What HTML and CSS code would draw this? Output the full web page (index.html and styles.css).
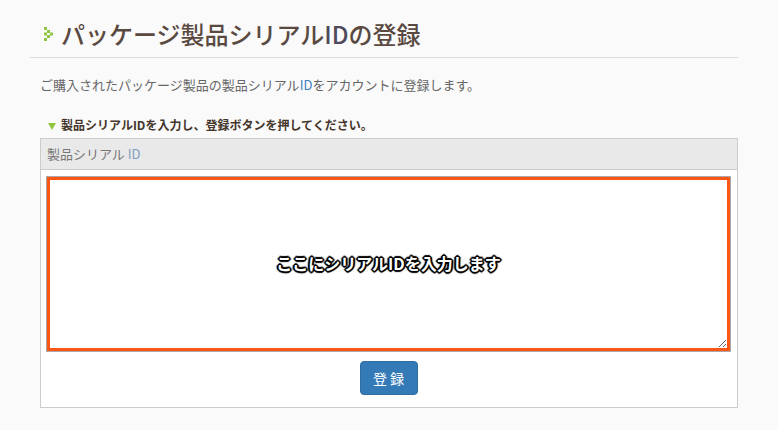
FILE: index.html
```
<!DOCTYPE html>
<html lang="ja">

<head>
    <meta charset="UTF-8">
    <meta name="viewport" content="width=device-width, initial-scale=1.0">
    <title>パッケージ製品シリアルIDの登録</title>
    <link rel="stylesheet" href="styles.css">
</head>

<body>
    <div id="page">
        <h1 class="title">
            <svg class="title-icon" width="9" height="14" viewBox="0 0 9 14">
                <rect x="0" y="0" width="3" height="3" />
                <rect x="3" y="3" width="3" height="3" />
                <rect x="0" y="5.5" width="3" height="3" />
                <rect x="6" y="5.5" width="3" height="3" />
                <rect x="3" y="8" width="3" height="3" />
                <rect x="0" y="11" width="3" height="3" />
            </svg>
            パッケージ製品シリアル<span class="latin">ID</span>の登録
        </h1>

        <p class="lead">ご購入されたパッケージ製品の製品シリアル<span class="blue">ID</span>をアカウントに登録します。</p>

        <p class="step"><span class="arrow"></span>製品シリアルIDを入力し、登録ボタンを押してください。</p>

        <div class="panel">
            <div class="panel-head">製品シリアル <span class="blue-gray">ID</span></div>
            <div class="panel-body">
                <textarea id="serial" name="serial" placeholder="ここにシリアルIDを入力します"></textarea>
                <div class="actions">
                    <button class="btn">登 録</button>
                </div>
            </div>
        </div>
    </div>
</body>

</html>
```

FILE: styles.css
```
* {
    margin: 0;
    padding: 0;
    box-sizing: border-box;
}

body {
    background-color: #fafafa;
    font-family: "Noto Sans CJK JP", "Noto Sans", sans-serif;
    color: #555;
}

#page {
    width: 708px;
    margin-left: 30px;
    padding-top: 18px;
}

.title {
    display: flex;
    align-items: center;
    padding: 0 0 7px 14px;
    font-size: 24px;
    line-height: 32px;
    font-weight: 500;
    color: #594941;
    border-bottom: 1px solid #dcdcdc;
}

.title-icon {
    fill: #8fc640;
    margin-right: 8px;
}

.title .latin {
    color: #4e4a5a;
}

.lead {
    margin-top: 17px;
    padding-left: 10px;
    font-size: 13px;
    line-height: 20px;
    color: #666;
}

.blue {
    color: #3d7fc1;
}

.blue-gray {
    color: #7e9cc0;
}

.step {
    display: flex;
    align-items: center;
    margin-top: 22px;
    padding-left: 18px;
    font-size: 12px;
    line-height: 16px;
    font-weight: 700;
    color: #45362b;
}

.arrow {
    width: 0;
    height: 0;
    border-left: 4px solid transparent;
    border-right: 4px solid transparent;
    border-top: 7px solid #8fc640;
    margin: 2px 5px 0 0;
}

.panel {
    margin: 5px 0 0 10px;
    border: 1px solid #ccc;
    background-color: #fff;
}

.panel-head {
    height: 31px;
    padding: 0 6px;
    line-height: 30px;
    font-size: 13px;
    color: #777;
    background-color: #e9e9e9;
    border-bottom: 1px solid #ccc;
}

.panel-body {
    padding: 6px 6px 12px 5px;
}

#serial {
    display: block;
    width: calc(100% - 2px);
    height: 174px;
    margin: 1px;
    padding: 72px 10px 0;
    border: 3px solid #fb5616;
    box-shadow: 0 0 0 1px #a8a8a8;
    outline: none;
    text-align: center;
    font-family: "Noto Sans CJK JP", sans-serif;
    font-size: 16px;
    line-height: 22px;
    font-weight: 700;
}

#serial::placeholder {
    color: #fff;
    opacity: 1;
    text-shadow: 1px 0 0 #000, -1px 0 0 #000, 0 1px 0 #000, 0 -1px 0 #000,
        1px 1px 0 #000, -1px -1px 0 #000, 1px -1px 0 #000, -1px 1px 0 #000,
        2px 0 1px #000, -2px 0 1px #000, 0 2px 1px #000, 0 -2px 1px #000;
}

.actions {
    margin-top: 10px;
    text-align: center;
}

.btn {
    width: 58px;
    height: 34px;
    font-family: "Noto Sans CJK JP", sans-serif;
    font-size: 14px;
    color: #fff;
    background-color: #337ab7;
    border: 1px solid #2e6da4;
    border-radius: 4px;
    cursor: pointer;
}
```
